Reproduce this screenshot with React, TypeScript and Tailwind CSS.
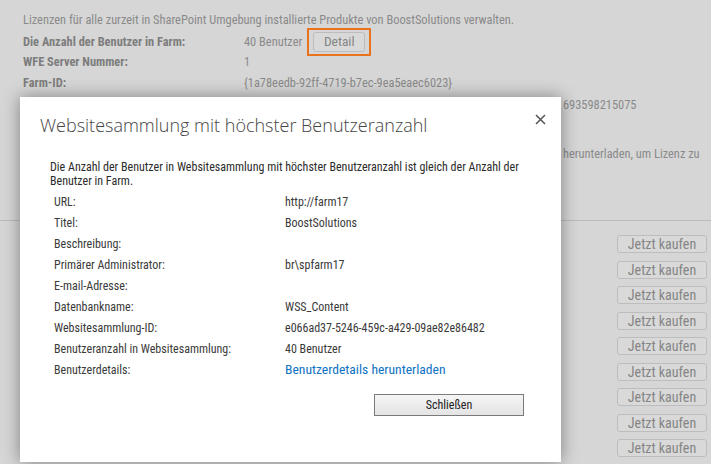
import React from "react";

const FONT = { fontFamily: '"Roboto Condensed", "Liberation Sans", Arial, sans-serif' };

function BgButton({ children, className = "" }: { children: React.ReactNode; className?: string }) {
  return (
    <button
      className={
        "h-[18px] rounded-[3px] border border-[#bdbdbd] bg-[#d9d9d9] text-[#858585] text-[14px] leading-none flex items-center justify-center " +
        className
      }
    >
      {children}
    </button>
  );
}

const rows: [string, React.ReactNode][] = [
  ["URL:", "http://farm17"],
  ["Titel:", "BoostSolutions"],
  ["Beschreibung:", ""],
  ["Primärer Administrator:", "br\\spfarm17"],
  ["E-mail-Adresse:", ""],
  ["Datenbankname:", "WSS_Content"],
  ["Websitesammlung-ID:", "e066ad37-5246-459c-a429-09ae82e86482"],
  ["Benutzeranzahl in Websitesammlung:", "40 Benutzer"],
  [
    "Benutzerdetails:",
    <a className="text-[#0f72c2] text-[13.6px]" href="#" key="l">
      Benutzerdetails herunterladen
    </a>,
  ],
];

export default function App() {
  return (
    <div className="relative w-[711px] h-[464px] overflow-hidden bg-[#d6d6d6] text-[#8a8a8a]" style={FONT}>
      {/* Background page */}
      <div className="pt-[12px] text-[12.4px] leading-[16px]">
        <div className="pl-[23px]">
          Lizenzen für alle zurzeit in SharePoint Umgebung installierte Produkte von BoostSolutions verwalten.
        </div>
        <div className="pl-[23px] mt-[4px] flex flex-col">
          <div className="flex items-center h-[20px]">
            <span className="w-[221px] font-bold text-[#7d7d7d]">Die Anzahl der Benutzer in Farm:</span>
            <span>40 Benutzer</span>
            <span className="ml-[5px] border-2 border-[#e8731c] px-[4px] py-[2px]">
              <button className="w-[52px] h-[20px] rounded-[3px] border border-[#bdbdbd] bg-[#d9d9d9] text-[#858585] text-[13.5px] leading-none flex items-center justify-center">
                Detail
              </button>
            </span>
          </div>
          <div className="flex items-center h-[20px]">
            <span className="w-[221px] font-bold text-[#7d7d7d]">WFE Server Nummer:</span>
            <span>1</span>
          </div>
          <div className="flex items-center h-[21px]">
            <span className="w-[221px] font-bold text-[#7d7d7d]">Farm-ID:</span>
            <span>{"{1a78eedb-92ff-4719-b7ec-9ea5eaec6023}"}</span>
          </div>
          <div className="flex items-center h-[21px] pt-[2px]">
            <span className="w-[540px] shrink-0 font-bold text-[#7d7d7d]">Lizenzschlüssel:</span>
            <span>693598215075</span>
          </div>
          <div className="h-[30px]" />
          <div className="flex items-center h-[20px]">
            <span className="w-[540px] shrink-0">Klicken Sie auf Lizenzdatei </span>
            <span>herunterladen, um Lizenz zu</span>
          </div>
        </div>
        <div className="mt-[56px] border-t border-[#bcbcbc]" />
        <div className="flex flex-col items-end pr-[4px] pt-[14px] gap-[7.5px]">
          {Array.from({ length: 9 }).map((_, i) => (
            <BgButton key={i} className="w-[90px]">
              Jetzt kaufen
            </BgButton>
          ))}
        </div>
      </div>

      {/* Dialog */}
      <div className="absolute left-[20px] top-[97px] w-[541px] h-[365px] bg-white shadow-[0_0_16px_rgba(0,0,0,0.4)] text-[#444]">
        <div className="flex items-start justify-between pl-[20px] pr-[14px] pt-[14px]">
          <h1
            className="text-[18px] leading-[28px] text-[#444]"
            style={{ fontFamily: '"Open Sans", "Liberation Sans", sans-serif', fontWeight: 300 }}
          >
            Websitesammlung mit höchster Benutzeranzahl
          </h1>
          <button className="mt-[1px] w-[14px] h-[14px] flex items-center justify-center">
            <svg width="11" height="11" viewBox="0 0 11 11">
              <path d="M1 1 L10 10 M10 1 L1 10" stroke="#555" strokeWidth="1.5" />
            </svg>
          </button>
        </div>
        <div className="pl-[30px] pr-[30px] mt-[21px] text-[12px] leading-[14px] text-[#2b2b2b]">
          Die Anzahl der Benutzer in Websitesammlung mit höchster Benutzeranzahl ist gleich der Anzahl der Benutzer in
          Farm.
        </div>
        <div className="pl-[34px] mt-[3px] flex flex-col text-[12px] text-[#3a3a3a]">
          {rows.map(([l, v]) => (
            <div key={l} className="flex items-center h-[21px]">
              <span className="w-[231px] shrink-0">{l}</span>
              <span>{v}</span>
            </div>
          ))}
        </div>
        <div className="flex justify-end pr-[37px] mt-[14px]">
          <button className="w-[150px] h-[22px] border border-[#7a7a7a] bg-gradient-to-b from-[#f5f5f5] to-[#e4e4e4] text-[12px] text-[#222] leading-none">
            Schließen
          </button>
        </div>
      </div>
    </div>
  );
}
